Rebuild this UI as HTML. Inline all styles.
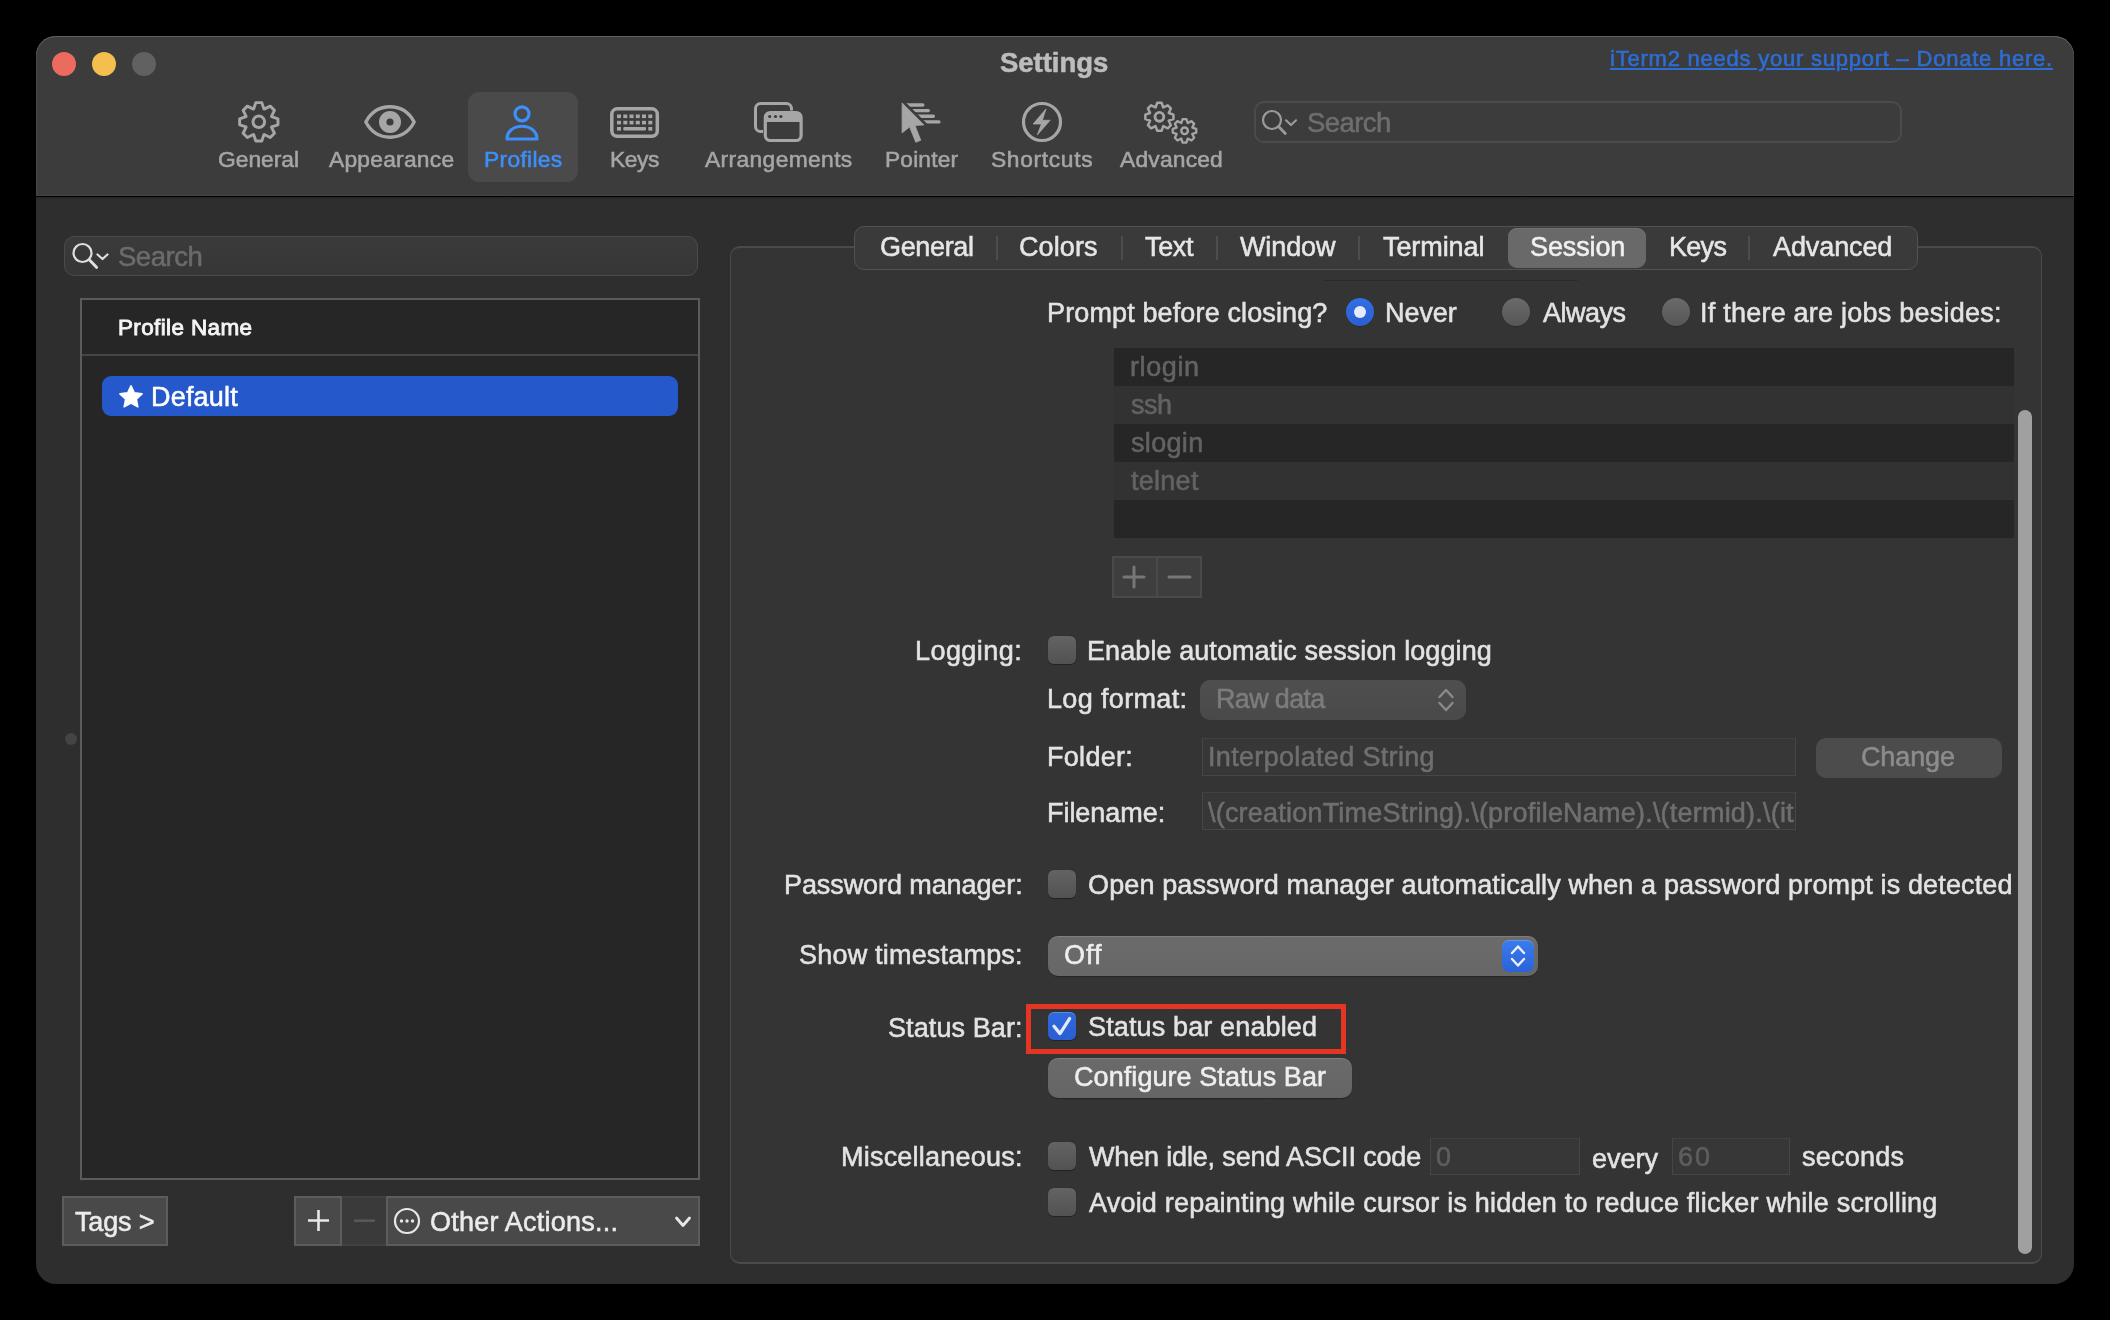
<!DOCTYPE html>
<html><head><meta charset="utf-8"><title>Settings</title>
<style>
html,body{margin:0;padding:0;background:#000;width:2110px;height:1320px;overflow:hidden;font-family:"Liberation Sans", sans-serif;}
.a{position:absolute;box-sizing:border-box;}
.t{position:absolute;white-space:nowrap;font-family:"Liberation Sans", sans-serif;will-change:transform;-webkit-text-stroke:0.55px currentColor;}
svg{position:absolute;overflow:visible;}
</style></head><body>
<div class="a" style="left:36px;top:36px;width:2038px;height:1248px;border-radius:20px;background:#2e2e2e;overflow:hidden;"></div>
<div class="a" style="left:36px;top:36px;width:2038px;height:160px;border-radius:20px 20px 0 0;background:#3c3c3c;box-shadow:inset 0 1px 0 #5f5f5f, inset 1px 0 0 #464646, inset -1px 0 0 #464646;"></div>
<div class="a" style="left:36px;top:195px;width:2038px;height:1px;background:#444;"></div>
<div class="a" style="left:36px;top:196px;width:2038px;height:1px;background:#000;"></div>
<div class="a" style="left:36px;top:197px;width:2038px;height:4px;background:linear-gradient(#272727,#2e2e2e);"></div>
<div class="a" style="left:52px;top:52px;width:24px;height:24px;border-radius:50%;background:#ed6a5e;"></div>
<div class="a" style="left:92px;top:52px;width:24px;height:24px;border-radius:50%;background:#f4bf4f;"></div>
<div class="a" style="left:132px;top:52px;width:24px;height:24px;border-radius:50%;background:#616161;"></div>
<div class="a" style="left:468px;top:92px;width:110px;height:90px;border-radius:11px;background:#4a4a4a;"></div>
<div class="a" style="left:1254px;top:101px;width:648px;height:42px;border-radius:10px;border:2px solid #4b4b4b;"></div>
<svg width="2110" height="1320" style="left:0;top:0"><path d="M253.63,109.01 L255.81,102.63 L261.79,102.63 L263.97,109.01 L264.19,109.10 L270.24,106.13 L274.47,110.36 L271.50,116.41 L271.59,116.63 L277.97,118.81 L277.97,124.79 L271.59,126.97 L271.50,127.19 L274.47,133.24 L270.24,137.47 L264.19,134.50 L263.97,134.59 L261.79,140.97 L255.81,140.97 L253.63,134.59 L253.41,134.50 L247.36,137.47 L243.13,133.24 L246.10,127.19 L246.01,126.97 L239.63,124.79 L239.63,118.81 L246.01,116.63 L246.10,116.41 L243.13,110.36 L247.36,106.13 L253.41,109.10Z" fill="none" stroke="#a6a6a6" stroke-width="2.9" stroke-linejoin="round"/><circle cx="258.8" cy="121.8" r="5.8" fill="none" stroke="#a6a6a6" stroke-width="3"/><path d="M365.8,122 C372,110.5 380,106.8 390,106.8 C400,106.8 408,110.5 414.2,122 C408,133.5 400,137.2 390,137.2 C380,137.2 372,133.5 365.8,122Z" fill="none" stroke="#a6a6a6" stroke-width="3.4" stroke-linejoin="round"/><circle cx="390" cy="122" r="11" fill="#a6a6a6"/><circle cx="390" cy="122" r="3.6" fill="#3c3c3c"/><circle cx="522" cy="113.8" r="7" fill="none" stroke="#3d8ffb" stroke-width="3.2"/><path d="M507,139 C507,122 537,122 537,139 Z" fill="none" stroke="#3d8ffb" stroke-width="3.2" stroke-linejoin="round"/><rect x="611.8" y="108.8" width="45.5" height="27.5" rx="5.5" fill="none" stroke="#a6a6a6" stroke-width="3.5"/><rect x="617" y="114.5" width="4" height="3.6" fill="#a6a6a6"/><rect x="623.3" y="114.5" width="4" height="3.6" fill="#a6a6a6"/><rect x="629.5" y="114.5" width="4" height="3.6" fill="#a6a6a6"/><rect x="635.8" y="114.5" width="4" height="3.6" fill="#a6a6a6"/><rect x="642" y="114.5" width="4" height="3.6" fill="#a6a6a6"/><rect x="648.3" y="114.5" width="4" height="3.6" fill="#a6a6a6"/><rect x="617" y="120.8" width="4" height="3.6" fill="#a6a6a6"/><rect x="623.3" y="120.8" width="4" height="3.6" fill="#a6a6a6"/><rect x="629.5" y="120.8" width="4" height="3.6" fill="#a6a6a6"/><rect x="635.8" y="120.8" width="4" height="3.6" fill="#a6a6a6"/><rect x="642" y="120.8" width="4" height="3.6" fill="#a6a6a6"/><rect x="648.3" y="120.8" width="4" height="3.6" fill="#a6a6a6"/><rect x="617" y="127" width="4" height="3.6" fill="#a6a6a6"/><rect x="648.3" y="127" width="4" height="3.6" fill="#a6a6a6"/><rect x="623.3" y="127" width="22.7" height="3.6" rx="1" fill="#a6a6a6"/><rect x="755.5" y="103.5" width="36" height="28" rx="5" fill="none" stroke="#a6a6a6" stroke-width="3"/><rect x="763" y="110.5" width="40.5" height="32" rx="6" fill="#3c3c3c"/><path d="M765.5,122 L765.5,117 Q765.5,112.5 770,112.5 L796.5,112.5 Q801,112.5 801,117 L801,122 Z" fill="#a6a6a6"/><rect x="765.3" y="112.5" width="35.8" height="28" rx="5" fill="none" stroke="#a6a6a6" stroke-width="3.2"/><circle cx="769.7" cy="116.5" r="1.6" fill="#3c3c3c"/><circle cx="775.5" cy="116.5" r="1.6" fill="#3c3c3c"/><circle cx="780.9" cy="116.5" r="1.6" fill="#3c3c3c"/><line x1="905" y1="105" x2="922.8" y2="105" stroke="#a6a6a6" stroke-width="3.4" stroke-linecap="round"/><line x1="910" y1="110.6" x2="928.3" y2="110.6" stroke="#a6a6a6" stroke-width="3.4" stroke-linecap="round"/><line x1="915" y1="116.25" x2="933.3" y2="116.25" stroke="#a6a6a6" stroke-width="3.4" stroke-linecap="round"/><line x1="920" y1="121.9" x2="938.9" y2="121.9" stroke="#a6a6a6" stroke-width="3.4" stroke-linecap="round"/><path d="M902.1,102.9 L902.1,132.9 L909.6,126.9 L915.8,142.3 L920.8,140.3 L915,125.4 L924,124.9 Z" fill="#3c3c3c" stroke="#3c3c3c" stroke-width="6" stroke-linejoin="miter"/><path d="M902.1,102.9 L902.1,132.9 L909.6,126.9 L915.8,142.3 L920.8,140.3 L915,125.4 L924,124.9 Z" fill="#a6a6a6" stroke="#a6a6a6" stroke-width="0.8" stroke-linejoin="round"/><circle cx="1042" cy="122" r="18.5" fill="none" stroke="#a6a6a6" stroke-width="3.2"/><path d="M1046,108.9 L1033.1,124 L1041.4,124 L1037.3,135 L1050.1,120.3 L1042.3,120.3 Z" fill="#a6a6a6" stroke="#a6a6a6" stroke-width="0.8" stroke-linejoin="round"/><path d="M1155.55,107.46 L1157.21,102.77 L1161.59,102.77 L1163.25,107.46 L1163.28,107.48 L1167.77,105.33 L1170.87,108.43 L1168.72,112.92 L1168.74,112.95 L1173.43,114.61 L1173.43,118.99 L1168.74,120.65 L1168.72,120.68 L1170.87,125.17 L1167.77,128.27 L1163.28,126.12 L1163.25,126.14 L1161.59,130.83 L1157.21,130.83 L1155.55,126.14 L1155.52,126.12 L1151.03,128.27 L1147.93,125.17 L1150.08,120.68 L1150.06,120.65 L1145.37,118.99 L1145.37,114.61 L1150.06,112.95 L1150.08,112.92 L1147.93,108.43 L1151.03,105.33 L1155.52,107.48Z" fill="none" stroke="#a6a6a6" stroke-width="2.5" stroke-linejoin="round"/><circle cx="1159.4" cy="116.8" r="4.4" fill="none" stroke="#a6a6a6" stroke-width="2.9"/><path d="M1181.28,123.04 L1182.61,119.05 L1186.39,119.05 L1187.72,123.04 L1187.71,123.04 L1191.47,121.15 L1194.15,123.83 L1192.26,127.59 L1192.26,127.58 L1196.25,128.91 L1196.25,132.69 L1192.26,134.02 L1192.26,134.01 L1194.15,137.77 L1191.47,140.45 L1187.71,138.56 L1187.72,138.56 L1186.39,142.55 L1182.61,142.55 L1181.28,138.56 L1181.29,138.56 L1177.53,140.45 L1174.85,137.77 L1176.74,134.01 L1176.74,134.02 L1172.75,132.69 L1172.75,128.91 L1176.74,127.58 L1176.74,127.59 L1174.85,123.83 L1177.53,121.15 L1181.29,123.04Z" fill="none" stroke="#a6a6a6" stroke-width="2.3" stroke-linejoin="round"/><circle cx="1184.6" cy="130.8" r="3.3" fill="none" stroke="#a6a6a6" stroke-width="2.4"/><circle cx="1272" cy="120" r="9" fill="none" stroke="#9a9a9a" stroke-width="2.2"/><line x1="1278.8" y1="126.8" x2="1285.3" y2="133.4" stroke="#9a9a9a" stroke-width="2.8" stroke-linecap="round"/><path d="M1286,120.3 L1291,125 L1296,120.3" fill="none" stroke="#9a9a9a" stroke-width="2.2" stroke-linecap="round" stroke-linejoin="round"/></svg>
<div class="a" style="left:64px;top:236px;width:634px;height:40px;border-radius:10px;background:linear-gradient(#3b3b3b,#363636);border:1.5px solid #4a4a4a;"></div>
<div class="a" style="left:80px;top:298px;width:620px;height:882px;background:#262626;border:2px solid #5b5b5b;"></div>
<div class="a" style="left:82px;top:354px;width:616px;height:2px;background:#464646;"></div>
<div class="a" style="left:102px;top:376px;width:576px;height:40px;border-radius:9px;background:#2458cb;"></div>
<div class="a" style="left:65px;top:733px;width:12px;height:12px;border-radius:50%;background:#444;"></div>
<div class="a" style="left:62px;top:1196px;width:106px;height:50px;background:#494949;border:2px solid #5c5c5c;"></div>
<div class="a" style="left:294px;top:1196px;width:48px;height:50px;background:#494949;border:2px solid #5c5c5c;"></div>
<div class="a" style="left:342px;top:1196px;width:45px;height:50px;background:#3a3a3a;border-top:2px solid #414141;border-bottom:2px solid #414141;"></div>
<div class="a" style="left:386px;top:1196px;width:314px;height:50px;background:#494949;border:2px solid #5c5c5c;"></div>
<svg width="2110" height="1320" style="left:0;top:0"><circle cx="82.5" cy="253" r="9" fill="none" stroke="#dedede" stroke-width="2.2"/><line x1="89.3" y1="259.8" x2="96.5" y2="267.3" stroke="#dedede" stroke-width="3" stroke-linecap="round"/><path d="M97.5,254.5 L102.5,259 L107.5,254.5" fill="none" stroke="#dedede" stroke-width="2.2" stroke-linecap="round" stroke-linejoin="round"/><polygon points="131.00,385.80 134.29,392.87 142.03,393.82 136.33,399.13 137.82,406.78 131.00,403.00 124.18,406.78 125.67,399.13 119.97,393.82 127.71,392.87" fill="#fff" stroke="#fff" stroke-width="1.6" stroke-linejoin="round"/><path d="M318.5,1210 L318.5,1231 M308,1220.5 L329,1220.5" stroke="#e8e8e8" stroke-width="2.6"/><path d="M354,1220.7 L375,1220.7" stroke="#585858" stroke-width="2.6"/><circle cx="407" cy="1221" r="12" fill="none" stroke="#e8e8e8" stroke-width="2.2"/><circle cx="401.5" cy="1221" r="1.7" fill="#e8e8e8"/><circle cx="407" cy="1221" r="1.7" fill="#e8e8e8"/><circle cx="412.5" cy="1221" r="1.7" fill="#e8e8e8"/><path d="M676.5,1218 L683,1225.5 L689.5,1218" fill="none" stroke="#e8e8e8" stroke-width="2.8" stroke-linecap="round" stroke-linejoin="round"/></svg>
<div class="a" style="left:730px;top:246px;width:1312px;height:1018px;border-radius:10px;background:#343434;border:1px solid #4a4a4a;border-top:2px solid #4a4a4a;border-bottom:2px solid #4b4b4b;"></div>
<div class="a" style="left:854px;top:226px;width:1064px;height:44px;border-radius:10px;background:#3a3a3a;border:1.5px solid #525252;"></div>
<div class="a" style="left:1508px;top:228px;width:138px;height:40px;border-radius:9px;background:#696969;box-shadow:inset 0 1px 0 #747474;"></div>
<div class="a" style="left:996px;top:236px;width:2px;height:24px;background:#4d4d4d;"></div>
<div class="a" style="left:1120.5px;top:236px;width:2px;height:24px;background:#4d4d4d;"></div>
<div class="a" style="left:1215.7px;top:236px;width:2px;height:24px;background:#4d4d4d;"></div>
<div class="a" style="left:1357.7px;top:236px;width:2px;height:24px;background:#4d4d4d;"></div>
<div class="a" style="left:1748.3px;top:236px;width:2px;height:24px;background:#4d4d4d;"></div>
<div class="a" style="left:1323px;top:280px;width:255px;height:1px;background:#2b2b2b;"></div>
<div class="a" style="left:1346px;top:298px;width:28px;height:28px;border-radius:50%;background:linear-gradient(#336fe3,#2a5ed2);box-shadow:0 0.5px 1px rgba(0,0,0,.3);"></div>
<div class="a" style="left:1354px;top:306px;width:12px;height:12px;border-radius:50%;background:#e5ebfa;"></div>
<div class="a" style="left:1502px;top:298px;width:28px;height:28px;border-radius:50%;background:linear-gradient(#6a6a6a,#565656);box-shadow:0 0.5px 1px rgba(0,0,0,.3);"></div>
<div class="a" style="left:1662px;top:298px;width:28px;height:28px;border-radius:50%;background:linear-gradient(#6a6a6a,#565656);box-shadow:0 0.5px 1px rgba(0,0,0,.3);"></div>
<div class="a" style="left:1114px;top:348px;width:900px;height:38px;background:#262626;"></div>
<div class="a" style="left:1114px;top:386px;width:900px;height:38px;background:#323232;"></div>
<div class="a" style="left:1114px;top:424px;width:900px;height:38px;background:#262626;"></div>
<div class="a" style="left:1114px;top:462px;width:900px;height:38px;background:#323232;"></div>
<div class="a" style="left:1114px;top:500px;width:900px;height:38px;background:#262626;"></div>
<div class="a" style="left:1112px;top:556px;width:90px;height:42px;background:#3e3e3e;border:2px solid #4a4a4a;"></div>
<div class="a" style="left:1156px;top:556px;width:2px;height:42px;background:#4a4a4a;"></div>
<div class="a" style="left:2018px;top:410px;width:14px;height:844px;border-radius:7px;background:#a0a0a0;"></div>
<div class="a" style="left:1048px;top:636px;width:28px;height:28px;border-radius:6px;background:linear-gradient(#636363,#525252);box-shadow:0 0.5px 1px rgba(0,0,0,.35);"></div>
<div class="a" style="left:1048px;top:870px;width:28px;height:28px;border-radius:6px;background:linear-gradient(#636363,#525252);box-shadow:0 0.5px 1px rgba(0,0,0,.35);"></div>
<div class="a" style="left:1048px;top:1142px;width:28px;height:28px;border-radius:6px;background:linear-gradient(#636363,#525252);box-shadow:0 0.5px 1px rgba(0,0,0,.35);"></div>
<div class="a" style="left:1048px;top:1188px;width:28px;height:28px;border-radius:6px;background:linear-gradient(#636363,#525252);box-shadow:0 0.5px 1px rgba(0,0,0,.35);"></div>
<div class="a" style="left:1200px;top:680px;width:266px;height:40px;border-radius:10px;background:linear-gradient(#4f4f4f,#494949);"></div>
<div class="a" style="left:1202px;top:738px;width:594px;height:38px;background:#373737;border:1px solid #464646;border-top-color:#404040;"></div>
<div class="a" style="left:1202px;top:792px;width:594px;height:38px;background:#373737;border:1px solid #464646;border-top-color:#404040;"></div>
<div class="a" style="left:1816px;top:738px;width:186px;height:40px;border-radius:10px;background:#4c4c4c;"></div>
<div class="a" style="left:1048px;top:936px;width:490px;height:40px;border-radius:10px;background:linear-gradient(#6b6b6b,#676767);box-shadow:inset 0 1px 0 rgba(255,255,255,.14), 0 1px 1px rgba(0,0,0,.3);"></div>
<div class="a" style="left:1502px;top:940px;width:32px;height:32px;border-radius:7px;background:linear-gradient(#3a7cec,#2b62d8);box-shadow:inset 0 1px 0 rgba(255,255,255,.2);"></div>
<div class="a" style="left:1026.4px;top:1004.2px;width:319.5px;height:49.6px;border:5.7px solid #e53523;"></div>
<div class="a" style="left:1048px;top:1012px;width:28px;height:28px;border-radius:6px;background:linear-gradient(#3069de,#2a5ed2);box-shadow:inset 0 1px 0 rgba(255,255,255,.22), 0 0.5px 1px rgba(0,0,0,.35);"></div>
<div class="a" style="left:1048px;top:1058px;width:304px;height:40px;border-radius:10px;background:linear-gradient(#6a6a6a,#656565);box-shadow:inset 0 1px 0 rgba(255,255,255,.14), 0 1px 1px rgba(0,0,0,.3);"></div>
<div class="a" style="left:1430px;top:1138px;width:150px;height:37px;background:#373737;border:1px solid #464646;border-top-color:#404040;"></div>
<div class="a" style="left:1672px;top:1138px;width:118px;height:37px;background:#373737;border:1px solid #464646;border-top-color:#404040;"></div>
<svg width="2110" height="1320" style="left:0;top:0"><path d="M1439.5,697 L1446,690 L1452.5,697 M1439.5,703 L1446,710 L1452.5,703" fill="none" stroke="#8a8a8a" stroke-width="2.4" stroke-linecap="round" stroke-linejoin="round"/><path d="M1512,953 L1518,946.5 L1524,953 M1512,959 L1518,965.5 L1524,959" fill="none" stroke="#eaf0fb" stroke-width="2.4" stroke-linecap="round" stroke-linejoin="round"/><path d="M1054,1026.3 L1060,1033.6 L1069.6,1018.6" fill="none" stroke="#e2e8f7" stroke-width="3.3" stroke-linecap="round" stroke-linejoin="round"/><path d="M1134,567 L1134,587 M1124,577 L1144,577" stroke="#777" stroke-width="3" stroke-linecap="round"/><path d="M1169,577 L1190,577" stroke="#777" stroke-width="3" stroke-linecap="round"/></svg>
<div class="t" style="left:1000.0px;top:48.7px;font-size:27.5px;line-height:27.5px;font-weight:700;color:#bdbdbd;letter-spacing:-0.03px;">Settings</div>
<div class="t" style="left:1610.0px;top:47.7px;font-size:22px;line-height:22px;font-weight:400;color:#2d6dd6;letter-spacing:0.77px;text-decoration:underline;text-underline-offset:2px;text-decoration-thickness:2px;">iTerm2 needs your support – Donate here.</div>
<div class="t" style="left:218.0px;top:148.2px;font-size:22.8px;line-height:22.8px;font-weight:400;color:#a6a6a6;letter-spacing:-0.01px;">General</div>
<div class="t" style="left:328.6px;top:148.2px;font-size:22.8px;line-height:22.8px;font-weight:400;color:#a6a6a6;letter-spacing:0.24px;">Appearance</div>
<div class="t" style="left:483.5px;top:148.2px;font-size:22.8px;line-height:22.8px;font-weight:400;color:#3d8ffb;letter-spacing:0.31px;">Profiles</div>
<div class="t" style="left:610.0px;top:148.2px;font-size:22.8px;line-height:22.8px;font-weight:400;color:#a6a6a6;letter-spacing:-0.43px;">Keys</div>
<div class="t" style="left:704.5px;top:148.2px;font-size:22.8px;line-height:22.8px;font-weight:400;color:#a6a6a6;letter-spacing:0.37px;">Arrangements</div>
<div class="t" style="left:885.0px;top:148.2px;font-size:22.8px;line-height:22.8px;font-weight:400;color:#a6a6a6;letter-spacing:0.14px;">Pointer</div>
<div class="t" style="left:990.8px;top:148.2px;font-size:22.8px;line-height:22.8px;font-weight:400;color:#a6a6a6;letter-spacing:0.66px;">Shortcuts</div>
<div class="t" style="left:1119.5px;top:148.2px;font-size:22.8px;line-height:22.8px;font-weight:400;color:#a6a6a6;letter-spacing:0.20px;">Advanced</div>
<div class="t" style="left:1307.0px;top:108.8px;font-size:27.5px;line-height:27.5px;font-weight:400;color:#6e6e6e;letter-spacing:-0.57px;">Search</div>
<div class="t" style="left:118.0px;top:242.8px;font-size:27.5px;line-height:27.5px;font-weight:400;color:#6b6b6b;letter-spacing:-0.47px;">Search</div>
<div class="t" style="left:118.0px;top:317.0px;font-size:22.5px;line-height:22.5px;font-weight:400;color:#f4f4f4;letter-spacing:0.36px;-webkit-text-stroke:0.9px currentColor;">Profile Name</div>
<div class="t" style="left:150.7px;top:383.9px;font-size:27px;line-height:27px;font-weight:400;color:#ffffff;letter-spacing:0.19px;">Default</div>
<div class="t" style="left:75.3px;top:1208.8px;font-size:27px;line-height:27px;font-weight:400;color:#ececec;letter-spacing:-0.17px;">Tags &gt;</div>
<div class="t" style="left:429.8px;top:1209.1px;font-size:27px;line-height:27px;font-weight:400;color:#ececec;letter-spacing:0.22px;">Other Actions...</div>
<div class="t" style="left:880.0px;top:234.1px;font-size:27px;line-height:27px;font-weight:400;color:#e6e6e6;letter-spacing:-0.34px;">General</div>
<div class="t" style="left:1019.0px;top:234.1px;font-size:27px;line-height:27px;font-weight:400;color:#e6e6e6;letter-spacing:0.10px;">Colors</div>
<div class="t" style="left:1145.0px;top:234.1px;font-size:27px;line-height:27px;font-weight:400;color:#e6e6e6;letter-spacing:-0.34px;">Text</div>
<div class="t" style="left:1240.0px;top:234.1px;font-size:27px;line-height:27px;font-weight:400;color:#e6e6e6;letter-spacing:-0.11px;">Window</div>
<div class="t" style="left:1383.0px;top:234.1px;font-size:27px;line-height:27px;font-weight:400;color:#e6e6e6;letter-spacing:-0.09px;">Terminal</div>
<div class="t" style="left:1529.5px;top:234.1px;font-size:27px;line-height:27px;font-weight:400;color:#f0f0f0;letter-spacing:-0.12px;">Session</div>
<div class="t" style="left:1669.0px;top:234.1px;font-size:27px;line-height:27px;font-weight:400;color:#e6e6e6;letter-spacing:-0.71px;">Keys</div>
<div class="t" style="left:1772.8px;top:234.1px;font-size:27px;line-height:27px;font-weight:400;color:#e6e6e6;letter-spacing:-0.10px;">Advanced</div>
<div class="t" style="left:1047.2px;top:300.0px;font-size:27px;line-height:27px;font-weight:400;color:#e3e3e3;letter-spacing:0.13px;">Prompt before closing?</div>
<div class="t" style="left:1385.2px;top:300.0px;font-size:27px;line-height:27px;font-weight:400;color:#e3e3e3;letter-spacing:-0.06px;">Never</div>
<div class="t" style="left:1543.0px;top:300.0px;font-size:27px;line-height:27px;font-weight:400;color:#e3e3e3;letter-spacing:-0.52px;">Always</div>
<div class="t" style="left:1700.0px;top:300.0px;font-size:27px;line-height:27px;font-weight:400;color:#e3e3e3;letter-spacing:0.23px;">If there are jobs besides:</div>
<div class="t" style="left:1129.5px;top:353.8px;font-size:27px;line-height:27px;font-weight:400;color:#636363;letter-spacing:0.60px;">rlogin</div>
<div class="t" style="left:1130.5px;top:391.8px;font-size:27px;line-height:27px;font-weight:400;color:#636363;letter-spacing:-0.45px;">ssh</div>
<div class="t" style="left:1130.5px;top:429.8px;font-size:27px;line-height:27px;font-weight:400;color:#636363;letter-spacing:0.33px;">slogin</div>
<div class="t" style="left:1130.5px;top:467.8px;font-size:27px;line-height:27px;font-weight:400;color:#636363;letter-spacing:0.27px;">telnet</div>
<div class="t" style="left:915.4px;top:637.8px;font-size:27px;line-height:27px;font-weight:400;color:#e3e3e3;letter-spacing:0.44px;">Logging:</div>
<div class="t" style="left:1087.3px;top:637.8px;font-size:27px;line-height:27px;font-weight:400;color:#e3e3e3;letter-spacing:0.08px;">Enable automatic session logging</div>
<div class="t" style="left:1047.4px;top:685.8px;font-size:27px;line-height:27px;font-weight:400;color:#e3e3e3;letter-spacing:0.35px;">Log format:</div>
<div class="t" style="left:1215.5px;top:685.8px;font-size:27px;line-height:27px;font-weight:400;color:#7c7c7c;letter-spacing:-0.68px;">Raw data</div>
<div class="t" style="left:1046.7px;top:744.0px;font-size:27px;line-height:27px;font-weight:400;color:#e3e3e3;letter-spacing:0.29px;">Folder:</div>
<div class="t" style="left:1207.5px;top:743.8px;font-size:27px;line-height:27px;font-weight:400;color:#6f6f6f;letter-spacing:0.33px;">Interpolated String</div>
<div class="t" style="left:1860.6px;top:743.9px;font-size:27px;line-height:27px;font-weight:400;color:#8c8c8c;letter-spacing:-0.13px;">Change</div>
<div class="t" style="left:1046.7px;top:799.8px;font-size:27px;line-height:27px;font-weight:400;color:#e3e3e3;letter-spacing:-0.04px;">Filename:</div>
<div class="t" style="left:783.8px;top:872.0px;font-size:27px;line-height:27px;font-weight:400;color:#e3e3e3;letter-spacing:-0.09px;">Password manager:</div>
<div class="t" style="left:1087.7px;top:872.0px;font-size:27px;line-height:27px;font-weight:400;color:#e3e3e3;letter-spacing:0.13px;">Open password manager automatically when a password prompt is detected</div>
<div class="t" style="left:798.8px;top:942.1px;font-size:27px;line-height:27px;font-weight:400;color:#e3e3e3;letter-spacing:0.20px;">Show timestamps:</div>
<div class="t" style="left:1064.0px;top:942.1px;font-size:27px;line-height:27px;font-weight:400;color:#eeeeee;letter-spacing:0.94px;">Off</div>
<div class="t" style="left:887.9px;top:1014.5px;font-size:27px;line-height:27px;font-weight:400;color:#e3e3e3;letter-spacing:0.09px;">Status Bar:</div>
<div class="t" style="left:1087.6px;top:1014.1px;font-size:27px;line-height:27px;font-weight:400;color:#e3e3e3;letter-spacing:0.14px;">Status bar enabled</div>
<div class="t" style="left:1074.0px;top:1064.0px;font-size:27px;line-height:27px;font-weight:400;color:#eeeeee;letter-spacing:0.07px;">Configure Status Bar</div>
<div class="t" style="left:841.0px;top:1143.8px;font-size:27px;line-height:27px;font-weight:400;color:#e3e3e3;letter-spacing:0.22px;">Miscellaneous:</div>
<div class="t" style="left:1088.9px;top:1143.8px;font-size:27px;line-height:27px;font-weight:400;color:#e3e3e3;letter-spacing:-0.16px;">When idle, send ASCII code</div>
<div class="t" style="left:1592.0px;top:1145.9px;font-size:27px;line-height:27px;font-weight:400;color:#e3e3e3;letter-spacing:-0.03px;">every</div>
<div class="t" style="left:1802.2px;top:1143.8px;font-size:27px;line-height:27px;font-weight:400;color:#e3e3e3;letter-spacing:0.24px;">seconds</div>
<div class="t" style="left:1436.4px;top:1143.8px;font-size:27px;line-height:27px;font-weight:400;color:#5e5e5e;letter-spacing:0.00px;">0</div>
<div class="t" style="left:1678.3px;top:1143.8px;font-size:27px;line-height:27px;font-weight:400;color:#5e5e5e;letter-spacing:1.88px;">60</div>
<div class="t" style="left:1088.9px;top:1189.8px;font-size:27px;line-height:27px;font-weight:400;color:#e3e3e3;letter-spacing:0.20px;">Avoid repainting while cursor is hidden to reduce flicker while scrolling</div>
<div class="a" style="left:1203px;top:793px;width:591px;height:36px;overflow:hidden;"><div class="t" style="left:4.8px;top:6.8px;font-size:27px;line-height:27px;color:#6f6f6f;letter-spacing:0.21px;">\(creationTimeString).\(profileName).\(termid).\(iterm2.pid)</div></div>
</body></html>
